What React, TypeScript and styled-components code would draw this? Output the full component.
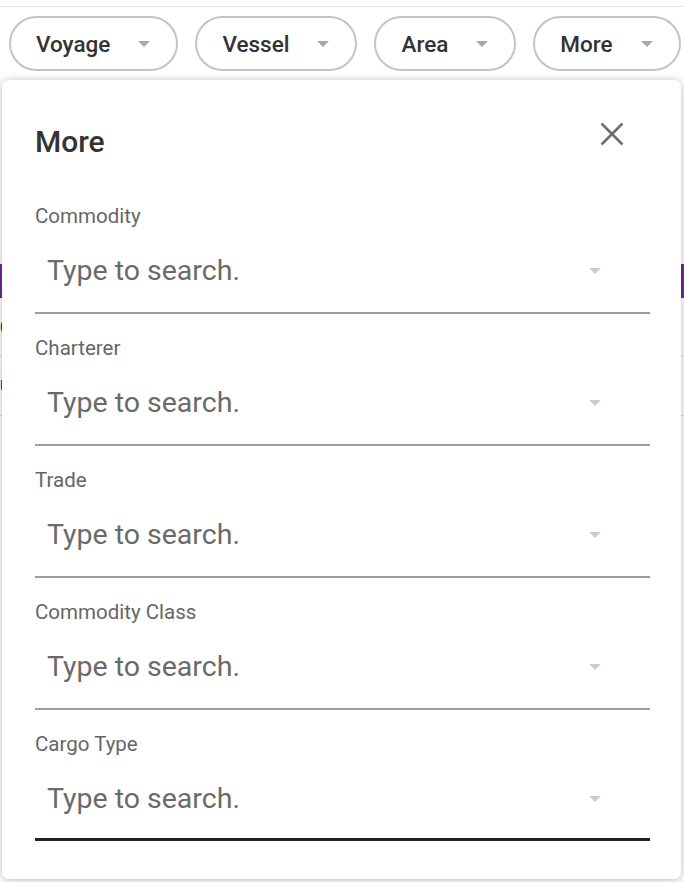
import React from "react";
import styled, { createGlobalStyle } from "styled-components";

const GlobalStyle = createGlobalStyle`
  html, body { margin: 0; padding: 0; background: #ffffff; }
  body { font-family: Roboto, "Liberation Sans", Arial, sans-serif; -webkit-font-smoothing: antialiased; }
  * { box-sizing: border-box; }
`;

const Page = styled.div`
  position: relative;
  width: 684px;
  height: 882px;
  overflow: hidden;
  background: #ffffff;
`;

const TopStrip = styled.div`
  height: 7px;
  border-bottom: 1px solid #e2e2e2;
`;

const Toolbar = styled.div`
  display: flex;
  align-items: center;
  gap: 17px;
  padding: 9px 9px 9px 9px;
  height: 73px;
`;

const Chip = styled.button`
  display: flex;
  align-items: center;
  gap: 28px;
  height: 55px;
  padding: 0 26px 0 25px;
  border: 2px solid #c4c4c4;
  border-radius: 28px;
  background: #ffffff;
  font-family: Roboto, "Liberation Sans", Arial, sans-serif;
  font-size: 22.5px;
  font-weight: 500;
  color: #333333;
  cursor: pointer;
`;

const Caret = styled.span<{ $color?: string }>`
  display: inline-block;
  width: 0;
  height: 0;
  border-left: 6px solid transparent;
  border-right: 6px solid transparent;
  border-top: 6px solid ${(p) => p.$color || "#a8a8a8"};
  border-radius: 1px;
`;

const Content = styled.div`
  padding-top: 184px;
`;

const TableHead = styled.div`
  height: 34px;
  background: #6f2b8f;
`;

const TableRow = styled.div`
  display: flex;
  justify-content: space-between;
  align-items: center;
  height: 59px;
  padding: 0 0;
  border-bottom: 1px solid #dddddd;
  font-family: Roboto, "Liberation Sans", Arial, sans-serif;
  font-size: 17px;
  color: #222222;
`;

const Panel = styled.div`
  position: absolute;
  left: 2px;
  top: 80px;
  width: 679px;
  height: 799px;
  background: #ffffff;
  border-radius: 7px;
  box-shadow: 0 1px 10px rgba(0, 0, 0, 0.28);
  padding: 44px 31px 0 33px;
  display: flex;
  flex-direction: column;
`;

const Header = styled.div`
  display: flex;
  justify-content: space-between;
  align-items: flex-start;
  height: 36px;
  margin-bottom: 22px;
`;

const Title = styled.h2`
  margin: 0;
  font-size: 30px;
  line-height: 36px;
  font-weight: 500;
  color: #333333;
`;

const CloseButton = styled.button`
  display: flex;
  padding: 0;
  margin: -2px 26px 0 0;
  border: none;
  background: transparent;
  cursor: pointer;
`;

const Field = styled.div<{ $focused?: boolean }>`
  display: flex;
  flex-direction: column;
  padding-top: 22px;
  padding-bottom: ${(p) => (p.$focused ? "23px" : "25px")};
  border-bottom: ${(p) => (p.$focused ? "3px solid #222222" : "2px solid #9e9e9e")};
`;

const Label = styled.label`
  font-size: 20.5px;
  line-height: 24px;
  color: #666666;
`;

const InputRow = styled.div`
  display: flex;
  align-items: center;
  justify-content: space-between;
  height: 32px;
  margin-top: 27px;
  padding: 0 49px 0 12px;
`;

const SearchInput = styled.input`
  flex: 1;
  border: none;
  outline: none;
  padding: 0;
  background: transparent;
  font-family: Roboto, "Liberation Sans", Arial, sans-serif;
  font-size: 28.5px;
  line-height: 32px;
  color: #666666;
  &::placeholder { color: #6a6a6a; opacity: 1; }
`;

const chips = ["Voyage", "Vessel", "Area", "More"];
const fields = ["Commodity", "Charterer", "Trade", "Commodity Class", "Cargo Type"];

export default function App() {
  return (
    <>
      <GlobalStyle />
      <Page>
        <TopStrip />
        <Toolbar>
          {chips.map((c) => (
            <Chip key={c}>
              {c}
              <Caret />
            </Chip>
          ))}
        </Toolbar>
        <Content>
          <TableHead />
          <TableRow>
            <span>0</span>
            <span>1</span>
          </TableRow>
          <TableRow>
            <span>U</span>
            <span>1</span>
          </TableRow>
        </Content>
        <Panel>
          <Header>
            <Title>More</Title>
            <CloseButton aria-label="Close">
              <svg width="24" height="24" viewBox="0 0 24 24">
                <path d="M1.5 1.5 L22.5 22.5 M22.5 1.5 L1.5 22.5" stroke="#6e6e6e" strokeWidth="2.6" strokeLinecap="butt" fill="none" />
              </svg>
            </CloseButton>
          </Header>
          {fields.map((f, i) => (
            <Field key={f} $focused={i === fields.length - 1}>
              <Label>{f}</Label>
              <InputRow>
                <SearchInput placeholder="Type to search." />
                <Caret $color="#cccccc" />
              </InputRow>
            </Field>
          ))}
        </Panel>
      </Page>
    </>
  );
}
